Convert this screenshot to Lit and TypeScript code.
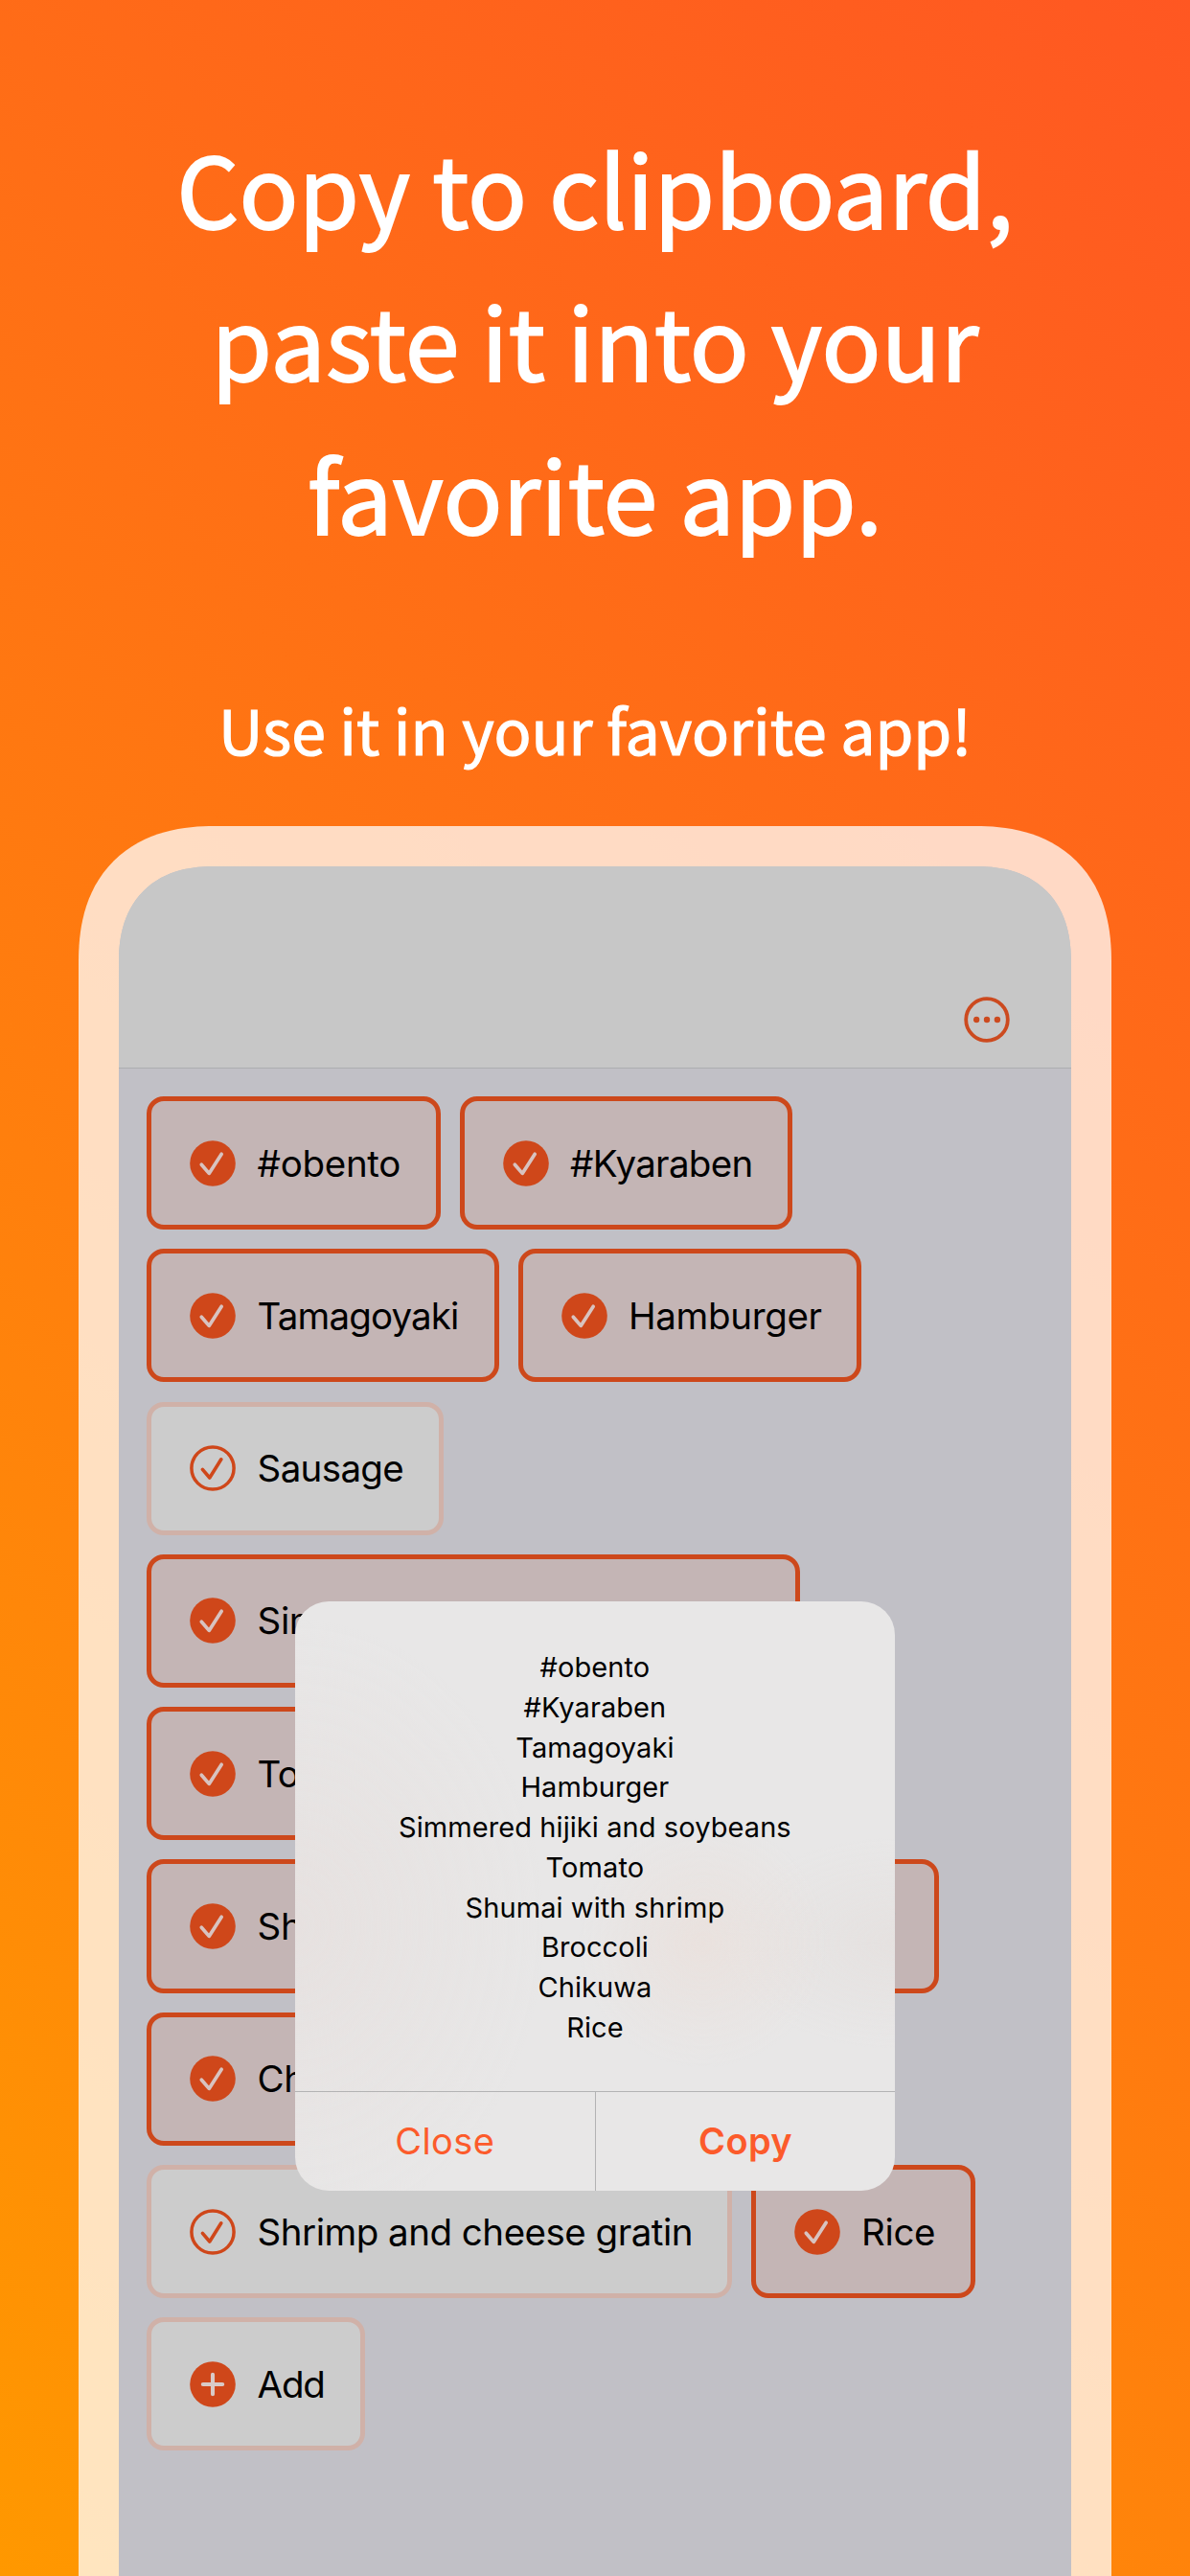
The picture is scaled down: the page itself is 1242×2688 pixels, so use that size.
import { LitElement, html, css, svg } from "lit";
import { customElement, property } from "lit/decorators.js";
import { classMap } from "lit/directives/class-map.js";

type ChipState = "on" | "off" | "add";

interface Chip {
  label: string;
  state: ChipState;
  width: number;
  tracking: number;
}

const ROWS: Chip[][] = [
  [
    { label: "#obento", state: "on", width: 306.5, tracking: -0.3 },
    { label: "#Kyaraben", state: "on", width: 347, tracking: -0.7 },
  ],
  [
    { label: "Tamagoyaki", state: "on", width: 367.5, tracking: -0.85 },
    { label: "Hamburger", state: "on", width: 358.5, tracking: -0.35 },
  ],
  [{ label: "Sausage", state: "off", width: 310, tracking: -0.65 }],
  [{ label: "Simmered hijiki and soybeans", state: "on", width: 681.5, tracking: -0.4 }],
  [{ label: "Tomato", state: "on", width: 291, tracking: -0.8 }],
  [
    { label: "Shumai with shrimp", state: "on", width: 505, tracking: -0.4 },
    { label: "Broccoli", state: "on", width: 302, tracking: -0.8 },
  ],
  [{ label: "Chikuwa", state: "on", width: 310, tracking: -0.4 }],
  [
    { label: "Shrimp and cheese gratin", state: "off", width: 610.5, tracking: -0.5 },
    { label: "Rice", state: "on", width: 234.5, tracking: -0.4 },
  ],
  [{ label: "Add", state: "add", width: 228, tracking: -1.2 }],
];

const COPIED = [
  "#obento",
  "#Kyaraben",
  "Tamagoyaki",
  "Hamburger",
  "Simmered hijiki and soybeans",
  "Tomato",
  "Shumai with shrimp",
  "Broccoli",
  "Chikuwa",
  "Rice",
];

@customElement("tag-chip")
export class TagChip extends LitElement {
  @property({ attribute: false }) chip!: Chip;

  static styles = css`
    :host {
      display: block;
    }
    .chip {
      box-sizing: border-box;
      display: flex;
      align-items: center;
      gap: 22.3px;
      height: 139.2px;
      padding-left: 40.3px;
      border: 5px solid #cd481b;
      border-radius: 18px;
      background: #c4b5b5;
      white-space: nowrap;
    }
    .plain {
      background: #cccccc;
      border-color: #d0b1a8;
    }
    .icon {
      flex: none;
      width: 48px;
      height: 48px;
    }
    .label {
      font-size: 38.5px;
      color: #000;
    }
  `;

  private icon() {
    switch (this.chip.state) {
      case "on":
        return svg`
          <circle cx="24" cy="24" r="23.8" fill="#cf471a" />
          <path d="M12.3 25.2 L20.2 34.4 L33.2 14.2" fill="none" stroke="#d8c3c0"
            stroke-width="3.7" stroke-linecap="round" stroke-linejoin="round" />`;
      case "off":
        return svg`
          <circle cx="24" cy="24" r="22.1" fill="none" stroke="#cf471a" stroke-width="3.5" />
          <path d="M13.4 25.4 L20.8 34 L32.8 14.8" fill="none" stroke="#cf471a"
            stroke-width="3.6" stroke-linecap="round" stroke-linejoin="round" />`;
      case "add":
        return svg`
          <circle cx="24" cy="24" r="23.8" fill="#cf471a" />
          <path d="M24 13.8 V34.2 M13.8 24 H34.2" fill="none" stroke="#d9cac7"
            stroke-width="4.1" stroke-linecap="round" />`;
    }
  }

  render() {
    const { label, state, width, tracking } = this.chip;
    return html`
      <div class=${classMap({ chip: true, plain: state !== "on" })} style="width:${width}px">
        <svg class="icon" viewBox="0 0 48 48" aria-hidden="true">${this.icon()}</svg>
        <span class="label" style="letter-spacing:${tracking}px">${label}</span>
      </div>
    `;
  }
}

@customElement("copy-alert")
export class CopyAlert extends LitElement {
  static styles = css`
    :host {
      display: block;
    }
    .alert {
      display: flex;
      flex-direction: column;
      height: 615px;
      border-radius: 35px;
      overflow: hidden;
      background:
        radial-gradient(circle 130px at 68% 58%, rgba(235, 222, 216, 0.6), transparent),
        radial-gradient(ellipse 260px 320px at 0% 55%, rgba(230, 223, 221, 0.7), transparent),
        radial-gradient(ellipse 180px 110px at 100% 58%, rgba(228, 223, 221, 0.7), transparent),
        #e8e7e7;
    }
    .lines {
      box-sizing: border-box;
      height: 511px;
      padding-top: 48px;
      font-size: 29px;
      line-height: 41.77px;
      letter-spacing: 0.08px;
      text-align: center;
      color: #000;
    }
    .actions {
      flex: 1;
      display: grid;
      grid-template-columns: 1fr 1fr;
      border-top: 1px solid #b3b3b4;
    }
    .action {
      display: flex;
      align-items: center;
      justify-content: center;
      font-size: 38px;
      letter-spacing: 0.4px;
      color: #fc5b2b;
    }
    .action + .action {
      border-left: 1px solid #b3b3b4;
    }
    .strong {
      font-weight: 600;
    }
  `;

  render() {
    return html`
      <div class="alert" role="alertdialog">
        <div class="lines">${COPIED.map((line) => html`<div>${line}</div>`)}</div>
        <div class="actions">
          <div class="action" role="button">Close</div>
          <div class="action strong" role="button">Copy</div>
        </div>
      </div>
    `;
  }
}

@customElement("app-root")
export class AppRoot extends LitElement {
  static styles = css`
    :host {
      display: block;
    }
    .page {
      box-sizing: border-box;
      width: 1242px;
      height: 2688px;
      padding: 115.2px 82px 0;
      overflow: hidden;
      display: flex;
      flex-direction: column;
      background: linear-gradient(45deg, #ff9800, #ff5722);
      font-family: Inter, "Liberation Sans", sans-serif;
    }
    .title,
    .subtitle {
      margin: 0;
      font-family: "Noto Sans CJK JP", sans-serif;
      font-weight: 400;
      color: #fff;
      text-align: center;
      white-space: nowrap;
    }
    .title {
      font-size: 102.4px;
      line-height: 159.3px;
      -webkit-text-stroke: 1.8px #fff;
    }
    .subtitle {
      margin-top: 116.5px;
      font-size: 64.4px;
      line-height: 100px;
      -webkit-text-stroke: 1.2px #fff;
    }
    .phone {
      flex: none;
      box-sizing: border-box;
      width: 1078px;
      height: 1900px;
      margin-top: 52.4px;
      padding: 42px 42px 0;
      border-radius: 142px 142px 0 0;
      corner-shape: superellipse(1.22);
      background: rgba(255, 255, 255, 0.75);
    }
    .screen {
      position: relative;
      height: 100%;
      border-radius: 100px 100px 0 0;
      corner-shape: superellipse(1.22);
      overflow: hidden;
      background: #c1c0c6;
    }
    .bar {
      box-sizing: border-box;
      height: 211px;
      display: flex;
      align-items: flex-end;
      justify-content: flex-end;
      padding: 0 64px 26px 0;
      border-bottom: 1px solid #adadb0;
      background: #c7c7c7;
    }
    .more {
      width: 48px;
      height: 48px;
    }
    .rows {
      display: flex;
      flex-direction: column;
      gap: 20.1px;
      padding: 29px 29px 0;
    }
    .row {
      display: flex;
      gap: 20px;
    }
    .modal {
      position: absolute;
      left: 183.6px;
      top: 767px;
      width: 626.6px;
    }
  `;

  render() {
    return html`
      <main class="page">
        <h1 class="title">Copy to clipboard,<br />paste it into your<br />favorite app.</h1>
        <p class="subtitle">Use it in your favorite app!</p>
        <section class="phone">
          <div class="screen">
            <header class="bar">
              <svg class="more" viewBox="0 0 48 48" aria-hidden="true">
                <circle cx="24" cy="24" r="21.8" fill="none" stroke="#cc4a1f" stroke-width="3.8" />
                <circle cx="13.1" cy="24" r="3.2" fill="#cc4a1f" />
                <circle cx="24" cy="24" r="3.2" fill="#cc4a1f" />
                <circle cx="34.9" cy="24" r="3.2" fill="#cc4a1f" />
              </svg>
            </header>
            <div class="rows">
              ${ROWS.map(
                (row) => html`<div class="row">
                  ${row.map((chip) => html`<tag-chip .chip=${chip}></tag-chip>`)}
                </div>`,
              )}
            </div>
            <copy-alert class="modal"></copy-alert>
          </div>
        </section>
      </main>
    `;
  }
}
